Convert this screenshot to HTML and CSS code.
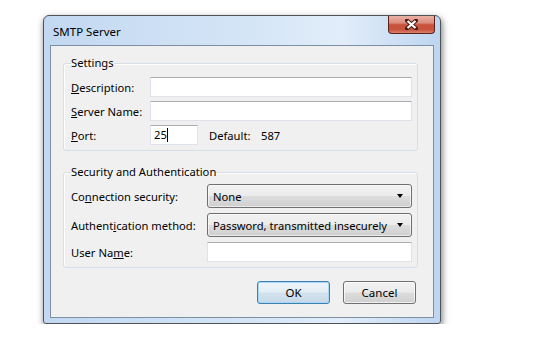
FILE: index.html
```html
<!DOCTYPE html>
<html lang="en">
<head>
    <meta charset="UTF-8">
    <title>SMTP Server</title>
    <link rel="stylesheet" href="styles.css">
</head>
<body>
    <div class="window">
        <div class="titlebar">
            <span class="title">SMTP Server</span>
            <div class="close">
                <svg width="13" height="11" viewBox="0 0 13 11">
                    <path d="M2 1.5 L11 9.5 M11 1.5 L2 9.5" stroke="#4a1a14" stroke-width="4" stroke-linecap="square"/>
                    <path d="M2.5 2 L10.5 9 M10.5 2 L2.5 9" stroke="#fff" stroke-width="2.2"/>
                </svg>
            </div>
        </div>

        <div class="client">
            <fieldset class="group">
                <legend>Settings</legend>
                <div class="rows rows-settings">
                    <label><u>D</u>escription:</label>
                    <div class="textbox"></div>
                    <label><u>S</u>erver Name:</label>
                    <div class="textbox"></div>
                    <label><u>P</u>ort:</label>
                    <div class="port-line">
                        <div class="textbox port">25<span class="caret"></span></div>
                        <span class="default-label">Default:</span>
                        <span>587</span>
                    </div>
                </div>
            </fieldset>

            <fieldset class="group security">
                <legend>Security and Authentication</legend>
                <div class="rows rows-security">
                    <label>Co<u>n</u>nection security:</label>
                    <div class="combo">None<span class="arrow"></span></div>
                    <label>Authent<u>i</u>cation method:</label>
                    <div class="combo">Password, transmitted insecurely<span class="arrow"></span></div>
                    <label>User Na<u>m</u>e:</label>
                    <div class="textbox"></div>
                </div>
            </fieldset>

            <div class="buttons">
                <button class="btn default">OK</button>
                <button class="btn">Cancel</button>
            </div>
        </div>
    </div>
</body>
</html>
```

FILE: styles.css
```css
body {
    margin: 0;
    background: #fff;
    font-family: 'Noto Sans', 'Open Sans', sans-serif;
    font-size: 11.2px;
    color: #000;
}
.window {
    box-sizing: border-box;
    margin: 15px 0 0 43px;
    width: 398px;
    height: 309px;
    border: 1px solid #4e5358;
    border-radius: 6px 6px 3px 3px;
    background: linear-gradient(to right, #c2d8f1 0%, #d6e6f7 55%, #e2edf9 75%, #bed5f0 100%);
    box-shadow: 1px 3px 7px rgba(0,0,0,0.55);
    padding: 0 6px 6px 6px;
}
.titlebar {
    height: 29px;
    display: flex;
    justify-content: space-between;
    align-items: center;
}
.title {
    padding-left: 3px;
    padding-top: 1px;
    font-size: 11.5px;
}
.close {
    align-self: flex-start;
    width: 47px;
    height: 18px;
    margin-right: -1px;
    box-sizing: border-box;
    border: 1px solid #5a2118;
    border-top: none;
    border-radius: 0 0 4px 4px;
    background: linear-gradient(#e9b0a4 0%, #dc8d7e 40%, #c8513c 52%, #c9543d 80%, #da8170 100%);
    display: flex;
    justify-content: center;
    align-items: center;
}
.client {
    box-sizing: border-box;
    height: 273px;
    background: #f0f0f0;
    border: 1px solid #7d8fa3;
    padding: 9px 15px 0 12px;
}
.group {
    margin: 0;
    border: 1px solid #d5dfe5;
    border-radius: 3px;
    box-shadow: inset 1px 1px #fff;
    padding: 6px 5px 5px 7px;
}
.group legend {
    padding: 0;
    line-height: 16px;
}
.security {
    margin-top: 13px;
    padding-top: 4px;
}
.rows {
    display: grid;
    align-items: center;
}
.rows-settings {
    grid-template-columns: 79px 1fr;
    grid-auto-rows: 20px;
    row-gap: 4px;
}
.rows-security {
    grid-template-columns: 136px 1fr;
    grid-template-rows: 24px 24px 20px;
    row-gap: 5px;
}
.textbox {
    box-sizing: border-box;
    height: 20px;
    background: #fff;
    border: 1px solid #dfe3e9;
    border-top-color: #abadb3;
    padding-left: 3px;
    line-height: 18px;
}
.port-line {
    display: flex;
    align-items: center;
}
.textbox.port {
    width: 48px;
}
.caret {
    display: inline-block;
    width: 1px;
    height: 14px;
    background: #000;
    vertical-align: -3px;
}
.default-label {
    margin-left: 11px;
    width: 52px;
}
.combo {
    box-sizing: border-box;
    height: 24px;
    border: 1px solid #707070;
    border-radius: 3px;
    background: linear-gradient(#f2f2f2 0%, #ebebeb 49%, #dddddd 51%, #cfcfcf 100%);
    box-shadow: inset 0 0 0 1px rgba(255,255,255,0.6);
    display: flex;
    align-items: center;
    justify-content: space-between;
    padding: 0 8px 0 5px;
}
.arrow {
    width: 0;
    height: 0;
    border-left: 3.5px solid transparent;
    border-right: 3.5px solid transparent;
    border-top: 4px solid #000;
}
.buttons {
    display: flex;
    justify-content: flex-end;
    gap: 13px;
    margin-top: 13px;
    padding-right: 2px;
}
.btn {
    width: 73px;
    height: 23px;
    font: inherit;
    font-size: 11.5px;
    color: #000;
    border: 1px solid #707070;
    border-radius: 3px;
    background: linear-gradient(#f2f2f2 0%, #ebebeb 49%, #dddddd 51%, #cfcfcf 100%);
    box-shadow: inset 0 0 0 1px rgba(255,255,255,0.7);
    padding: 0;
}
.btn.default {
    border-color: #3c7fb1;
    background: linear-gradient(#eef5fa 0%, #e3edf5 49%, #d3e2ee 51%, #c6d9e8 100%);
    box-shadow: inset 0 0 0 1px #a9d7f3;
}
```
